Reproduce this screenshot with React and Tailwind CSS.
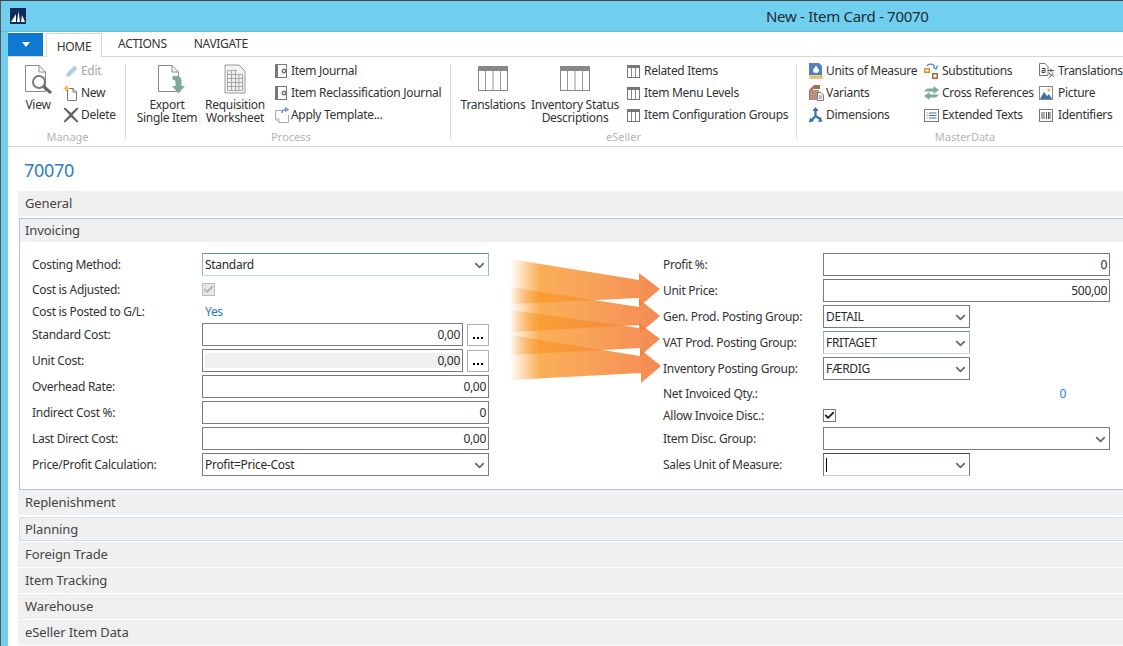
import React from "react";
import { ChevronDown, Check } from "lucide-react";

const FONT = "font-['Noto_Sans','Open_Sans',sans-serif]";

// ---- ribbon icons ----
const PageIcon = ({ className = "", children, w = 28, h = 30 }) => (
  <svg width={w} height={h} viewBox="0 0 28 30" className={className}>
    <path d="M1.5 1.5H15L21.5 8V27.5H1.5Z" fill="#fff" stroke="#8a8a8a" strokeWidth="1" />
    <path d="M15 1.5V8H21.5" fill="none" stroke="#8a8a8a" strokeWidth="1" />
    {children}
  </svg>
);

const ViewIcon = () => (
  <PageIcon>
    <circle cx="15" cy="18" r="6" fill="#fff" stroke="#7a7a7a" strokeWidth="2" />
    <path d="M19.5 22.5L27 29" stroke="#666" strokeWidth="3" />
  </PageIcon>
);

const ExportIcon = () => (
  <PageIcon className="ml-[8px]">
    <path d="M15.5 12H20C23 12 24.5 14 24.5 17V22H28L21.5 29.5L15 22H18.5V18C18.5 16.5 17.5 16 15.5 16Z" fill="#7fa99b" />
  </PageIcon>
);

const WorksheetIcon = () => (
  <svg width="22" height="30" viewBox="0 0 22 30">
    <path d="M1 1H15L21 7V29H1Z" fill="#f2f2f2" stroke="#9a9a9a" />
    <path d="M3.5 6.5H13M3.5 10.5H18.5M3.5 14.5H18.5M3.5 18.5H18.5M3.5 22.5H18.5M3.5 26.5H18.5M3.5 6.5V26.5M7.5 6.5V26.5M11.5 6.5V26.5M15 10.5V26.5M18.5 10.5V26.5" stroke="#a8a8a8" strokeWidth="1" fill="none" />
  </svg>
);

const BigTable = () => (
  <svg width="30" height="25" viewBox="0 0 30 25" className="mt-[2px]">
    <rect x="0.5" y="0.5" width="29" height="24" fill="#fff" stroke="#888" />
    <rect x="0" y="0" width="30" height="5" fill="#888" />
    <path d="M7.5 5V24M15 5V24M22.5 5V24" stroke="#999" />
  </svg>
);

const SmallTable = () => (
  <svg width="13" height="13" viewBox="0 0 13 13">
    <rect x="0.5" y="0.5" width="12" height="12" fill="#fff" stroke="#777" />
    <rect x="0" y="0" width="13" height="3" fill="#777" />
    <path d="M4.5 3V12M8.5 3V12" stroke="#888" />
  </svg>
);

const JournalIcon = () => (
  <svg width="13" height="14" viewBox="0 0 13 14">
    <rect x="0" y="0" width="12" height="14" fill="#777" />
    <rect x="3" y="1" width="8" height="12" fill="#fff" />
    <circle cx="9" cy="7" r="2.5" fill="#777" />
    <circle cx="9" cy="7" r="1" fill="#fff" />
  </svg>
);

const EditIcon = () => (
  <svg width="14" height="14" viewBox="0 0 14 14" className="ml-[2px]">
    <path d="M1 13L2 9L9.5 1.5L12.5 4.5L5 12Z" fill="#b4cbe3" />
  </svg>
);

const NewIcon = () => (
  <svg width="15" height="16" viewBox="0 0 15 16">
    <path d="M4.5 3.5H10L13.5 7V15.5H4.5Z" fill="#fff" stroke="#777" />
    <path d="M10 3.5V7H13.5" fill="none" stroke="#777" />
    <path d="M3.5 0.5V6.5M0.5 3.5H6.5M1.5 1.5L5.5 5.5M5.5 1.5L1.5 5.5" stroke="#f2b84b" strokeWidth="1" />
  </svg>
);

const DeleteIcon = () => (
  <svg width="16" height="16" viewBox="0 0 16 16">
    <path d="M0.5 1.5L2 0.5L8 6L14 0.5L15.5 1.5L9.5 8L15.5 14.5L14 15.5L8 10L2 15.5L0.5 14.5L6.5 8Z" fill="#606060" />
  </svg>
);

const TemplateIcon = () => (
  <svg width="15" height="16" viewBox="0 0 15 16">
    <path d="M0.5 3.5H8M13.5 8V15.5H4L0.5 12V3.5" fill="#fff" stroke="#aaa" />
    <path d="M0.5 12H4V15.5" fill="none" stroke="#aaa" />
    <path d="M7 6C7 3 9 2.5 11 2.5M10 0.5L13 2.5L10 4.5" fill="none" stroke="#4f81bd" strokeWidth="1.2" />
  </svg>
);

const UnitsIcon = () => (
  <svg width="14" height="16" viewBox="0 0 14 16">
    <path d="M0 0H10L13 3V12H0Z" fill="#4f81bd" />
    <path d="M7 2.5L10 7A3 3 0 1 1 4 7Z" fill="#fff" />
    <rect x="0" y="12" width="14" height="4" fill="#efd28a" />
    <path d="M3 13V15M6 13V15M9 13V15M12 13V15" stroke="#c09a45" />
  </svg>
);

const VariantsIcon = () => (
  <svg width="16" height="16" viewBox="0 0 16 16">
    <path d="M0 5L5 0H11V4H4V15H0Z" fill="#a06f55" />
    <rect x="1" y="5" width="9" height="10" fill="#b8917c" />
    <path d="M8.5 7.5H12L14.5 10V15.5H8.5Z" fill="#fff" stroke="#777" />
    <path d="M10 11H13M10 13H13" stroke="#777" />
  </svg>
);

const DimensionsIcon = () => (
  <svg width="14" height="16" viewBox="0 0 14 16">
    <path d="M6.5 1V9M6.5 9L2 14M6.5 9L12 12.5" stroke="#3a72b0" strokeWidth="2.2" fill="none" />
    <path d="M6.5 0L9.5 4H3.5ZM0 15.5L1 10.5L5 14ZM13.5 14.5L9 15L11.5 10Z" fill="#3a72b0" />
  </svg>
);

const SubstitutionsIcon = () => (
  <svg width="15" height="16" viewBox="0 0 15 16">
    <rect x="0" y="5" width="6" height="5" fill="#e98a2c" />
    <rect x="1.5" y="6.5" width="3" height="2" fill="#fff" />
    <rect x="8" y="10" width="6" height="6" fill="#a9663b" />
    <rect x="9.5" y="11.5" width="3" height="3" fill="#fff" />
    <path d="M3 3C4 1 9 0 11 3.5M9 4L12 6L13.5 2.5" fill="none" stroke="#4f81bd" strokeWidth="1.2" />
  </svg>
);

const CrossRefIcon = () => (
  <svg width="15" height="14" viewBox="0 0 15 14">
    <path d="M0 5.5H9.5V8L15 4L9.5 0V2.5H3Z" fill="#7fa99b" />
    <path d="M15 8.5H5.5V6L0 10L5.5 14V11.5H12Z" fill="#7fa99b" />
  </svg>
);

const ExtTextsIcon = () => (
  <svg width="15" height="13" viewBox="0 0 15 13">
    <rect x="0.5" y="0.5" width="14" height="12" fill="#fff" stroke="#777" />
    <path d="M2.5 4H3.5M5 4H12.5M2.5 6.5H3.5M5 6.5H12.5M2.5 9H3.5M5 9H12.5" stroke="#3a72b0" />
  </svg>
);

const TranslateIcon = () => (
  <svg width="15" height="16" viewBox="0 0 15 16">
    <path d="M0.5 0.5H6L9 3.5V12.5H0.5Z" fill="#fff" stroke="#777" />
    <path d="M3 5.5H6V9.5H3V7.5H6" fill="none" stroke="#444" />
    <path d="M9 7.5H15M12 5.5V9M10 9.5C11 12 13 13 15 13M14 9.5C13 12 11 14 9.5 15" fill="none" stroke="#555" />
  </svg>
);

const PictureIcon = () => (
  <svg width="14" height="14" viewBox="0 0 14 14">
    <rect x="0.5" y="0.5" width="13" height="13" fill="#fff" stroke="#888" />
    <path d="M1 13L5 6L8 10L10 8L13 13Z" fill="#3a72b0" />
    <circle cx="10" cy="4" r="1.5" fill="#f2a65a" />
  </svg>
);

const IdentifiersIcon = () => (
  <svg width="14" height="13" viewBox="0 0 14 13">
    <rect x="0.5" y="0.5" width="13" height="12" fill="#fff" stroke="#777" />
    <path d="M3 3V10M5 3V10M7.5 3V10M9.5 3V10M11 3V10" stroke="#555" />
  </svg>
);

const SmallAction = ({ icon, label, disabled, iconW = "w-[16px]" }) => (
  <div className={`flex items-center h-[22px] whitespace-nowrap ${disabled ? "text-[#a8a8a8]" : "text-[#333]"}`}>
    <span className={`${iconW} flex shrink-0`}>{icon}</span>
    <span className="ml-[1px]">{label}</span>
  </div>
);

const BigAction = ({ icon, lines, w }) => (
  <div className={`${w} shrink-0 flex flex-col items-center text-center text-[#333] leading-[13px]`}>
    <div className="h-[31px] flex items-start justify-center">{icon}</div>
    <div className="mt-[3px] whitespace-nowrap">
      {lines.map((l) => (
        <div key={l}>{l}</div>
      ))}
    </div>
  </div>
);

const RibbonGroup = ({ label, w, children, last, labelPad = "" }) => (
  <div className={`${w} shrink-0 relative ${last ? "" : "border-r border-[#dcdcdc]"} h-[75px]`}>
    <div className="flex">{children}</div>
    <div className={`absolute bottom-[-6px] left-0 right-0 text-center text-[#b4b4b4] text-[11px] tracking-normal ${labelPad}`}>{label}</div>
  </div>
);

const SmallCol = ({ className, children }) => <div className={`-mt-[4px] shrink-0 ${className}`}>{children}</div>;

// ---- form bits ----
const FieldBox = ({ w, children, tone = "border-[#7a7a7a]", bg = "bg-white" }) => (
  <div className={`${w} h-[23px] border ${tone} ${bg} shrink-0 flex items-center px-[2px] text-[#2b2b2b] justify-between`}>
    {children}
  </div>
);

const Chevron = () => <ChevronDown size={15} strokeWidth={3} className="text-[#6e6e6e] ml-auto -mr-[1px] mt-[2px]" />;

const Row = ({ label, children, labelW = "w-[170px]", h = "h-[26px]", center }) => (
  <div className={`flex ${h} ${center ? "items-center" : "items-start"}`}>
    <div className={`${labelW} shrink-0 leading-[23px] text-[#333] whitespace-nowrap`}>{label}</div>
    {children}
  </div>
);

const Dots = () => (
  <div className="w-[22px] h-[22px] mt-[1px] border border-[#b0b0b0] ml-[4px] flex items-end justify-center pb-[6px] gap-[2px] bg-white">
    <i className="w-[2px] h-[2px] bg-black" />
    <i className="w-[2px] h-[2px] bg-black" />
    <i className="w-[2px] h-[2px] bg-black" />
  </div>
);

const Tick = ({ muted }) => (
  <div className={`w-[13px] h-[13px] border flex items-center justify-center ${muted ? "border-[#bdbdbd] bg-[#e6e6e6]" : "border-[#777] bg-white"}`}>
    <Check size={11} strokeWidth={4} className={muted ? "text-[#b5b5b5]" : "text-[#222]"} />
  </div>
);

const Bar = ({ label, className = "h-[25px] leading-[25px] pl-[7px]" }) => (
  <div className={`bg-[#f0f0f0] text-[13px] tracking-[-0.1px] text-[#444] ${className}`}>{label}</div>
);

const Arrows = () => (
  <svg width="160" height="140" viewBox="0 0 160 140" className="absolute left-[505px] top-[249px] pointer-events-none">
    <defs>
      <linearGradient id="arrowFill" gradientUnits="userSpaceOnUse" x1="5" y1="0" x2="155" y2="0">
        <stop offset="0" stopColor="#f99a2c" stopOpacity="0" />
        <stop offset="0.2" stopColor="#f99a2c" stopOpacity="0.8" />
        <stop offset="0.5" stopColor="#f79035" stopOpacity="0.82" />
        <stop offset="1" stopColor="#f27a3c" stopOpacity="0.88" />
      </linearGradient>
    </defs>
    <path d="M5 9L134 30V23L155 39L134 57V48L5 54Z" fill="url(#arrowFill)" />
    <path d="M5 37L134 57V49L155 66L135 83V75L5 82Z" fill="url(#arrowFill)" />
    <path d="M5 60L134 78V73L155 89L135 106V98L5 105Z" fill="url(#arrowFill)" />
    <path d="M5 85L135 106V99L156 116L136 133V123L5 130Z" fill="url(#arrowFill)" />
  </svg>
);

export default function App() {
  return (
    <div className={`relative w-[1123px] h-[646px] overflow-hidden bg-white text-[12px] tracking-[-0.3px] ${FONT} border-t border-[#444]`}>
      <div className="flex h-full border-l border-[#555]">
        <div className="w-[7px] shrink-0 bg-[#70cfee] mt-[31px]" />
        <div className="flex-1 min-w-0">
          <div className="flex flex-col h-full">
            {/* title bar */}
            <div className="h-[31px] -ml-[7px] bg-[#70cfee] border-b border-[#6bb7d4] flex items-center shrink-0">
              <div className="ml-[9px] w-[16px] h-[16px] bg-[#0f2b5b] flex items-end justify-center">
                <svg width="14" height="13" viewBox="0 0 14 13">
                  <path d="M0 11L5 3V11ZM6 11L7.5 0L9 11ZM10 11L11 4L14 11Z" fill="#fff" />
                </svg>
              </div>
              <div className="ml-[740px] text-[15px] text-[#1f2a33] whitespace-nowrap">New - Item Card - 70070</div>
            </div>

            {/* tabs */}
            <div className="h-[25px] flex items-end border-b border-[#d8d8d8] shrink-0">
              <div className="w-[35px] h-[23px] bg-[#0f78d0] flex items-center justify-center">
                <div className="w-0 h-0 border-l-[4px] border-r-[4px] border-t-[5px] border-l-transparent border-r-transparent border-t-white" />
              </div>
              <div className="ml-[3px] w-[56px] h-[24px] -mb-[1px] bg-white border border-b-0 border-[#d8d8d8] text-center leading-[25px] text-[#333]">HOME</div>
              <div className="ml-[16px] leading-[24px] text-[#333]">ACTIONS</div>
              <div className="ml-[27px] leading-[24px] text-[#333]">NAVIGATE</div>
            </div>

            {/* ribbon */}
            <div className="h-[90px] border-b border-[#d8d8d8] pt-[7px] flex shrink-0">
              <RibbonGroup label="Manage" w="w-[118px]" labelPad="pl-[2px]">
                <div className="ml-[14px]">
                  <BigAction w="w-[32px]" icon={<ViewIcon />} lines={["View"]} />
                </div>
                <SmallCol className="ml-[9px]">
                  <SmallAction iconW="w-[17px]" disabled icon={<EditIcon />} label="Edit" />
                  <SmallAction iconW="w-[17px]" icon={<NewIcon />} label="New" />
                  <SmallAction iconW="w-[17px]" icon={<DeleteIcon />} label="Delete" />
                </SmallCol>
              </RibbonGroup>
              <RibbonGroup label="Process" w="w-[325px]" labelPad="pl-[6px]">
                <BigAction w="w-[82px]" icon={<ExportIcon />} lines={["Export", "Single Item"]} />
                <BigAction w="w-[54px]" icon={<WorksheetIcon />} lines={["Requisition", "Worksheet"]} />
                <SmallCol className="ml-[13px]">
                  <SmallAction iconW="w-[15px]" icon={<JournalIcon />} label="Item Journal" />
                  <SmallAction iconW="w-[15px]" icon={<JournalIcon />} label="Item Reclassification Journal" />
                  <SmallAction iconW="w-[15px]" icon={<TemplateIcon />} label="Apply Template..." />
                </SmallCol>
              </RibbonGroup>
              <RibbonGroup label="eSeller" w="w-[346px]">
                <BigAction w="w-[84px]" icon={<BigTable />} lines={["Translations"]} />
                <BigAction w="w-[80px]" icon={<BigTable />} lines={["Inventory Status", "Descriptions"]} />
                <SmallCol className="ml-[12px]">
                  <SmallAction icon={<SmallTable />} label="Related Items" />
                  <SmallAction icon={<SmallTable />} label="Item Menu Levels" />
                  <SmallAction icon={<SmallTable />} label="Item Configuration Groups" />
                </SmallCol>
              </RibbonGroup>
              <RibbonGroup label="MasterData" w="w-[326px]" last labelPad="pl-[10px]">
                <SmallCol className="ml-[12px] w-[115px]">
                  <SmallAction icon={<UnitsIcon />} label="Units of Measure" />
                  <SmallAction icon={<VariantsIcon />} label="Variants" />
                  <SmallAction icon={<DimensionsIcon />} label="Dimensions" />
                </SmallCol>
                <SmallCol className="w-[115px]">
                  <SmallAction iconW="w-[17px]" icon={<SubstitutionsIcon />} label="Substitutions" />
                  <SmallAction iconW="w-[17px]" icon={<CrossRefIcon />} label="Cross References" />
                  <SmallAction iconW="w-[17px]" icon={<ExtTextsIcon />} label="Extended Texts" />
                </SmallCol>
                <SmallCol>
                  <SmallAction iconW="w-[18px]" icon={<TranslateIcon />} label="Translations" />
                  <SmallAction iconW="w-[18px]" icon={<PictureIcon />} label="Picture" />
                  <SmallAction iconW="w-[18px]" icon={<IdentifiersIcon />} label="Identifiers" />
                </SmallCol>
              </RibbonGroup>
            </div>

            {/* page */}
            <div className="pl-[10px] flex-1 min-h-0 overflow-hidden">
              <div className="h-[44px] pl-[6px] pt-[11px] text-[18px] leading-[24px] text-[#2b7cc9]">70070</div>
              <Bar label="General" />
              <div className="mt-[2px] ml-[1px] border border-r-0 border-[#a3c7ef]">
                <Bar label="Invoicing" className="h-[23px] leading-[23px] pl-[5px]" />
                <div className="pl-[12px] pt-[11px] h-[247px] flex">
                  <div className="w-[457px] shrink-0">
                    <Row label="Costing Method:">
                      <FieldBox w="w-[287px]" tone="border-[#c4d8ea] border-t-[#5b93c4] border-l-[#8fb4d4] border-r-[#8fb4d4]">
                        Standard<Chevron />
                      </FieldBox>
                    </Row>
                    <Row label="Cost is Adjusted:" h="h-[21px]" center>
                      <Tick muted />
                    </Row>
                    <Row label="Cost is Posted to G/L:" h="h-[23px]" center>
                      <div className="pl-[3px] text-[#2b7cc9]">Yes</div>
                    </Row>
                    <Row label="Standard Cost:">
                      <FieldBox w="w-[261px]"><span className="ml-auto">0,00</span></FieldBox>
                      <Dots />
                    </Row>
                    <Row label="Unit Cost:">
                      <FieldBox w="w-[261px]">
                        <div className="flex-1 h-[15px] bg-[#f0f0f0] text-right leading-[15px]">0,00</div>
                      </FieldBox>
                      <Dots />
                    </Row>
                    <Row label="Overhead Rate:">
                      <FieldBox w="w-[287px]"><span className="ml-auto">0,00</span></FieldBox>
                    </Row>
                    <Row label="Indirect Cost %:">
                      <FieldBox w="w-[287px]"><span className="ml-auto">0</span></FieldBox>
                    </Row>
                    <Row label="Last Direct Cost:">
                      <FieldBox w="w-[287px]"><span className="ml-auto">0,00</span></FieldBox>
                    </Row>
                    <Row label="Price/Profit Calculation:">
                      <FieldBox w="w-[287px]">Profit=Price-Cost<Chevron /></FieldBox>
                    </Row>
                  </div>
                  <div className="ml-[174px] shrink-0">
                    <Row label="Profit %:" labelW="w-[160px]">
                      <FieldBox w="w-[287px]"><span className="ml-auto">0</span></FieldBox>
                    </Row>
                    <Row label="Unit Price:" labelW="w-[160px]">
                      <FieldBox w="w-[287px]"><span className="ml-auto">500,00</span></FieldBox>
                    </Row>
                    <Row label="Gen. Prod. Posting Group:" labelW="w-[160px]">
                      <FieldBox w="w-[147px]">DETAIL<Chevron /></FieldBox>
                    </Row>
                    <Row label="VAT Prod. Posting Group:" labelW="w-[160px]">
                      <FieldBox w="w-[147px]" tone="border-[#c4d8ea] border-t-[#6d8fb0] border-l-[#9db7cf] border-r-[#9db7cf]">FRITAGET<Chevron /></FieldBox>
                    </Row>
                    <Row label="Inventory Posting Group:" labelW="w-[160px]">
                      <FieldBox w="w-[147px]">FÆRDIG<Chevron /></FieldBox>
                    </Row>
                    <Row label="Net Invoiced Qty.:" labelW="w-[160px]" h="h-[21px]" center>
                      <div className="w-[243px] text-right text-[#2b7cc9]">0</div>
                    </Row>
                    <Row label="Allow Invoice Disc.:" labelW="w-[160px]" h="h-[23px]" center>
                      <Tick />
                    </Row>
                    <Row label="Item Disc. Group:" labelW="w-[160px]">
                      <FieldBox w="w-[287px]"><Chevron /></FieldBox>
                    </Row>
                    <Row label="Sales Unit of Measure:" labelW="w-[160px]">
                      <FieldBox w="w-[147px]" tone="border-[#c9c9d6] border-t-[#4a3f85] border-l-[#7a70a8] border-r-[#7a70a8]">
                        <i className="w-px h-[14px] bg-black" /><Chevron />
                      </FieldBox>
                    </Row>
                  </div>
                </div>
              </div>
              <Bar label="Replenishment" />
              <div className="mt-[2px] ml-[1px]">
                <Bar label="Planning" className="h-[24px] leading-[22px] border border-r-0 border-[#cfe0f5] pl-[5px]" />
              </div>
              <div className="mt-[1px]"><Bar label="Foreign Trade" /></div>
              <div className="mt-[1px]"><Bar label="Item Tracking" /></div>
              <div className="mt-[1px]"><Bar label="Warehouse" /></div>
              <div className="mt-[1px]"><Bar label="eSeller Item Data" /></div>
            </div>
          </div>
        </div>
      </div>
      <Arrows />
    </div>
  );
}
